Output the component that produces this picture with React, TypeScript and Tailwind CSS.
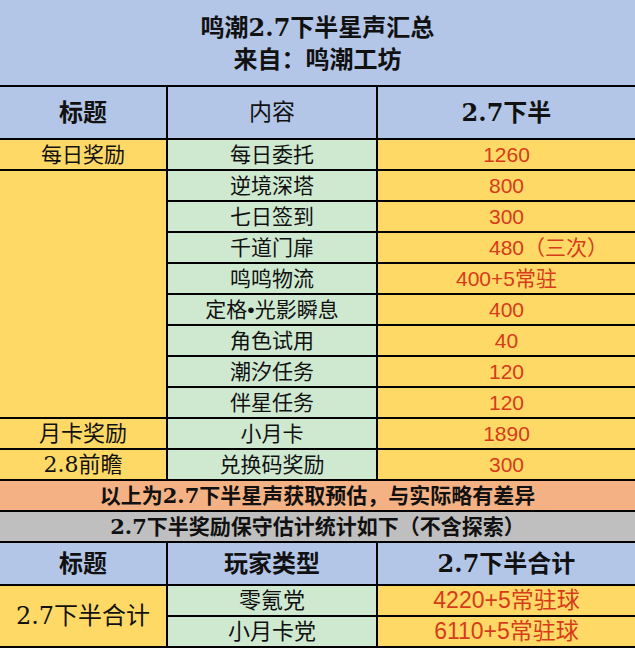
import React from "react";

const SERIF = "font-['DejaVu_Serif','Noto_Sans_CJK_SC',serif]";
const SANS = "font-['Liberation_Sans','Noto_Sans_CJK_SC',sans-serif]";

const BLUE = "bg-[#b4c6e7]";
const YELLOW = "bg-[#ffd966]";
const GREEN = "bg-[#cfe9d1]";
const RED = "text-[#d63b1a]";

const rows: { c: string; v: string; left?: boolean }[] = [
  { c: "每日委托", v: "1260" },
  { c: "逆境深塔", v: "800" },
  { c: "七日签到", v: "300" },
  { c: "千道门扉", v: "480（三次）", left: true },
  { c: "鸣鸣物流", v: "400+5常驻" },
  { c: "定格•光影瞬息", v: "400" },
  { c: "角色试用", v: "40" },
  { c: "潮汐任务", v: "120" },
  { c: "伴星任务", v: "120" },
  { c: "小月卡", v: "1890" },
  { c: "兑换码奖励", v: "300" },
];

function Cell({
  className = "",
  children,
}: {
  className?: string;
  children?: React.ReactNode;
}) {
  return (
    <div className={`flex items-center justify-center whitespace-nowrap ${className}`}>
      {children}
    </div>
  );
}

export default function App() {
  return (
    <div className="w-[635px] h-[648px] overflow-hidden bg-white">
      <div
        className={`grid grid-cols-[166px_208px_257px] grid-rows-[85px_51px_repeat(13,29px)_41px_29px_29px] gap-[2px] bg-black pb-[2px] text-[#111] ${SERIF}`}
      >
        {/* Title */}
        <div
          className={`col-span-3 ${BLUE} flex flex-col items-center justify-center text-[24px] leading-[32px] font-bold pt-[2px]`}
        >
          <div>鸣潮2.7下半星声汇总</div>
          <div>来自：鸣潮工坊</div>
        </div>

        {/* Header */}
        <Cell className={`${BLUE} text-[24px] font-bold`}>标题</Cell>
        <Cell className={`${BLUE} text-[23px]`}>内容</Cell>
        <Cell className={`${BLUE} text-[24px] font-bold`}>2.7下半</Cell>

        {/* Left column cells */}
        <Cell className={`${YELLOW} ${SANS} text-[21px] col-start-1 row-start-3`}>每日奖励</Cell>
        <div className={`${YELLOW} col-start-1 row-start-4 row-span-8`} />
        <Cell className={`${YELLOW} ${SANS} text-[22px] col-start-1 row-start-12`}>月卡奖励</Cell>
        <Cell className={`${YELLOW} text-[22px] col-start-1 row-start-13`}>2.8前瞻</Cell>

        {rows.map((r, i) => (
          <React.Fragment key={i}>
            <Cell className={`${GREEN} ${SANS} text-[21px] col-start-2`}>{r.c}</Cell>
            <div
              className={`${YELLOW} ${SANS} ${RED} text-[21px] col-start-3 flex items-center whitespace-nowrap ${
                r.left ? "justify-start pl-[111px]" : "justify-center"
              }`}
            >
              {r.v}
            </div>
          </React.Fragment>
        ))}

        {/* Notes */}
        <Cell className="col-span-3 bg-[#f4b183] text-[21px] font-bold">
          以上为2.7下半星声获取预估，与实际略有差异
        </Cell>
        <Cell className="col-span-3 bg-[#bfbfbf] text-[21px] font-bold">
          2.7下半奖励保守估计统计如下（不含探索）
        </Cell>

        {/* Header 2 */}
        <Cell className={`${BLUE} text-[24px] font-bold`}>标题</Cell>
        <Cell className={`${BLUE} text-[24px] font-bold`}>玩家类型</Cell>
        <Cell className={`${BLUE} text-[24px] font-bold`}>2.7下半合计</Cell>

        {/* Totals */}
        <Cell className={`${YELLOW} row-span-2 text-[24px]`}>2.7下半合计</Cell>
        <Cell className={`${GREEN} ${SANS} text-[22px]`}>零氪党</Cell>
        <Cell className={`${YELLOW} ${SANS} ${RED} text-[23px]`}>4220+5常驻球</Cell>
        <Cell className={`${GREEN} ${SANS} text-[22px]`}>小月卡党</Cell>
        <Cell className={`${YELLOW} ${SANS} ${RED} text-[23px]`}>6110+5常驻球</Cell>
      </div>
    </div>
  );
}
